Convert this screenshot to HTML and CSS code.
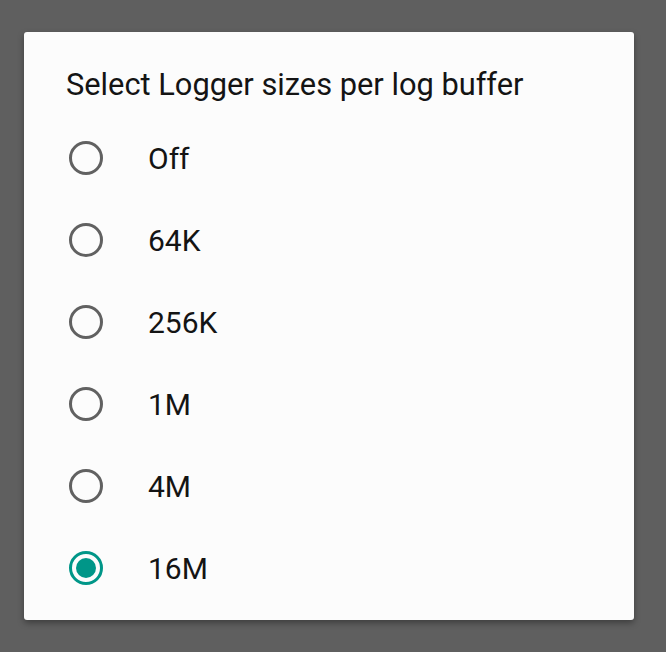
FILE: index.html
```html
<!DOCTYPE html>
<html>
<head>
    <title>Logger sizes</title>
    <meta charset="utf-8">
    <link rel="stylesheet" href="styles.css">
</head>
<body>
    <div class="dialog">
        <h1 class="title">Select Logger sizes per log buffer</h1>
        <div class="options">
            <label class="option"><span class="radio"></span><span class="label">Off</span></label>
            <label class="option"><span class="radio"></span><span class="label">64K</span></label>
            <label class="option"><span class="radio"></span><span class="label">256K</span></label>
            <label class="option"><span class="radio"></span><span class="label">1M</span></label>
            <label class="option"><span class="radio"></span><span class="label">4M</span></label>
            <label class="option"><span class="radio checked"></span><span class="label">16M</span></label>
        </div>
    </div>
</body>
</html>
```
FILE: styles.css
```css
html,body{margin:0;height:100%;}
body{background-color:#5f5f5f;font-family:Roboto, 'Noto Sans', sans-serif;color:#141414;}
.dialog{
    margin:32px 0 0 24px;width:610px;height:588px;box-sizing:border-box;
    background-color:#fcfcfc;border-radius:3px;
    box-shadow:0 3px 6px rgba(0,0,0,0.35);
    padding:33px 0 0 42px;
}
.title{margin:0;font-size:30.8px;font-weight:400;line-height:40px;}
.options{display:flex;flex-direction:column;margin-top:12px;}
.option{display:flex;align-items:center;height:82px;}
.radio{
    width:34px;height:34px;border:3px solid #616161;border-radius:50%;
    margin-left:3px;box-sizing:border-box;display:flex;align-items:center;justify-content:center;
}
.radio.checked{border-color:#009688;}
.radio.checked::after{content:"";width:20px;height:20px;border-radius:50%;background-color:#009688;}
.label{margin-left:45px;font-size:30px;}
```
